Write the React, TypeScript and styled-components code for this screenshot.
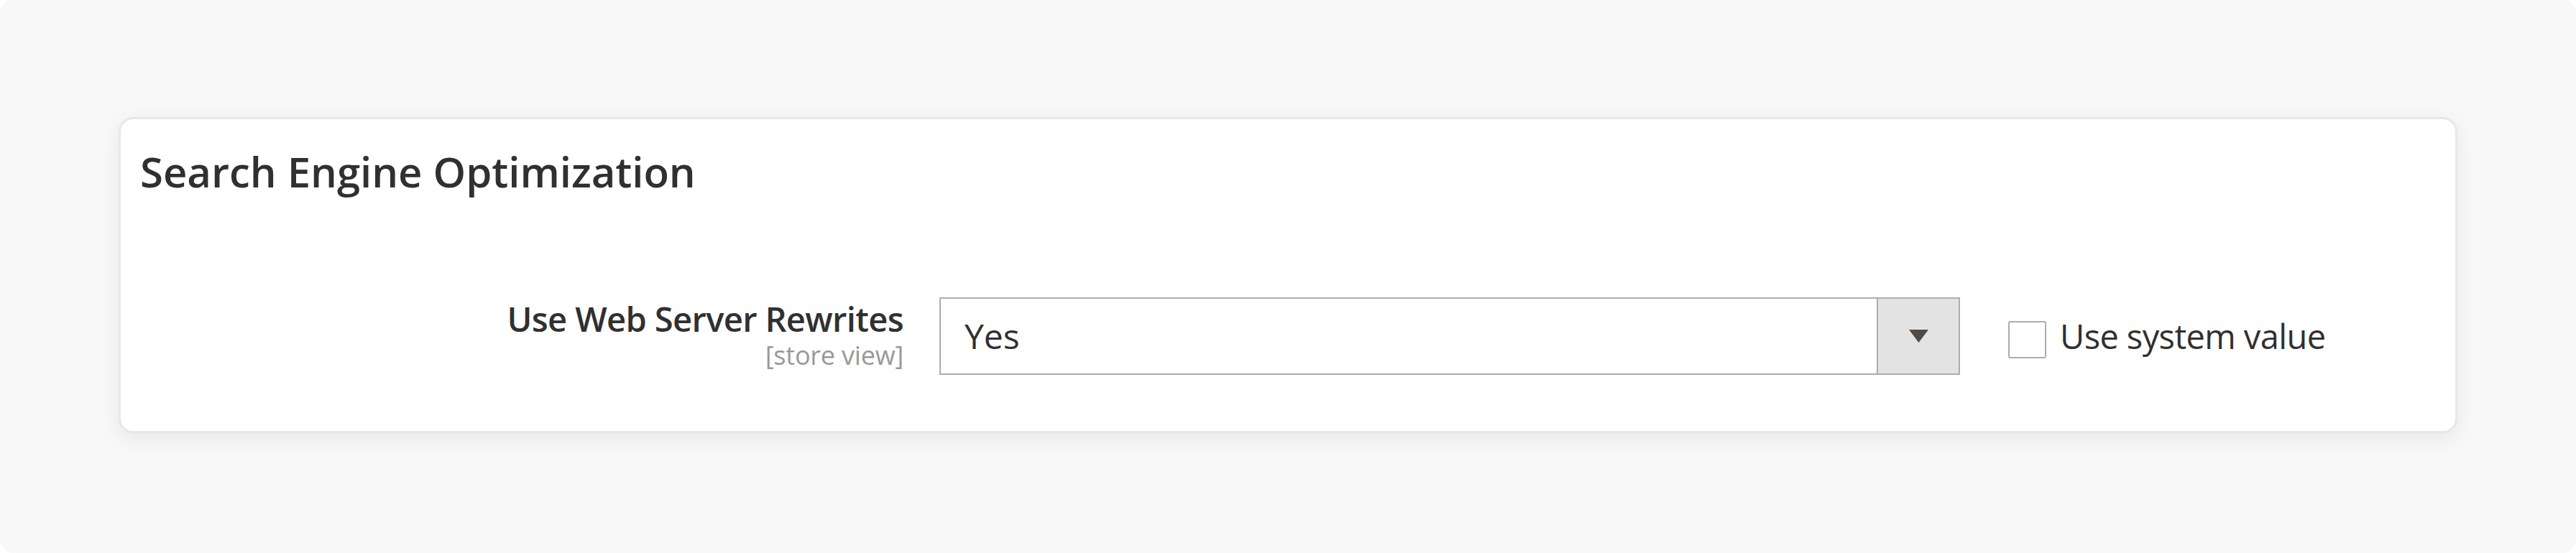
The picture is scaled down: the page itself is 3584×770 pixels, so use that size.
import React from 'react';
import styled, { createGlobalStyle } from 'styled-components';

const GlobalStyle = createGlobalStyle`
  html, body {
    margin: 0;
    padding: 0;
    background: #ffffff;
  }
  body {
    font-family: "Open Sans", "Liberation Sans", Arial, sans-serif;
    color: #303030;
  }
`;

const Page = styled.div`
  box-sizing: border-box;
  width: 3584px;
  height: 770px;
  background: #f8f8f8;
  border-radius: 18px;
  padding: 163px 165px 0 165px;
`;

const Card = styled.section`
  box-sizing: border-box;
  height: 440px;
  background: #ffffff;
  border: 3px solid #e8e8e8;
  border-radius: 20px;
  box-shadow: 0 8px 30px rgba(0, 0, 0, 0.07);
  padding: 38px 0 0 27px;
`;

const Title = styled.h2`
  margin: 0;
  font-size: 58px;
  line-height: 70px;
  font-weight: 600;
  color: #303030;
`;

const FormRow = styled.div`
  display: flex;
  align-items: flex-start;
  margin-top: 140px;
  margin-left: -27px;
`;

const LabelCol = styled.div`
  width: 1089px;
  display: flex;
  flex-direction: column;
  align-items: flex-end;
  padding-top: 5px;
`;

const FieldLabel = styled.label`
  font-size: 47px;
  line-height: 50px;
  letter-spacing: -0.6px;
  font-weight: 600;
  color: #303030;
`;

const Scope = styled.span`
  font-size: 36px;
  line-height: 40px;
  letter-spacing: -0.2px;
  color: #999999;
  margin-top: 6px;
`;

const Select = styled.div`
  box-sizing: border-box;
  margin-left: 50px;
  width: 1420px;
  height: 108px;
  border: 2px solid #adadad;
  display: flex;
  align-items: stretch;
  background: #ffffff;
`;

const SelectValue = styled.div`
  flex: 1;
  display: flex;
  align-items: center;
  padding-left: 33px;
  font-size: 48px;
  line-height: 60px;
  color: #303030;
`;

const SelectArrow = styled.div`
  width: 112px;
  border-left: 2px solid #adadad;
  background: #e3e3e3;
  display: flex;
  align-items: center;
  justify-content: center;
`;

const SystemValue = styled.div`
  height: 108px;
  margin-left: 67px;
  display: flex;
  align-items: center;
  gap: 19px;
`;

const Checkbox = styled.span`
  box-sizing: border-box;
  width: 53px;
  height: 52px;
  border: 2px solid #adadad;
  border-radius: 3px;
  background: #ffffff;
  margin-top: 10px;
`;

const CheckboxText = styled.span`
  font-size: 47px;
  line-height: 60px;
  letter-spacing: -0.6px;
  color: #303030;
`;

const App: React.FC = () => {
  return (
    <>
      <GlobalStyle />
      <Page>
        <Card>
          <Title>Search Engine Optimization</Title>
          <FormRow>
            <LabelCol>
              <FieldLabel>Use Web Server Rewrites</FieldLabel>
              <Scope>[store view]</Scope>
            </LabelCol>
            <Select>
              <SelectValue>Yes</SelectValue>
              <SelectArrow>
                <svg width="27" height="18" viewBox="0 0 27 18">
                  <polygon points="0,0 27,0 13.5,18" fill="#514943" />
                </svg>
              </SelectArrow>
            </Select>
            <SystemValue>
              <Checkbox />
              <CheckboxText>Use system value</CheckboxText>
            </SystemValue>
          </FormRow>
        </Card>
      </Page>
    </>
  );
};

export default App;
